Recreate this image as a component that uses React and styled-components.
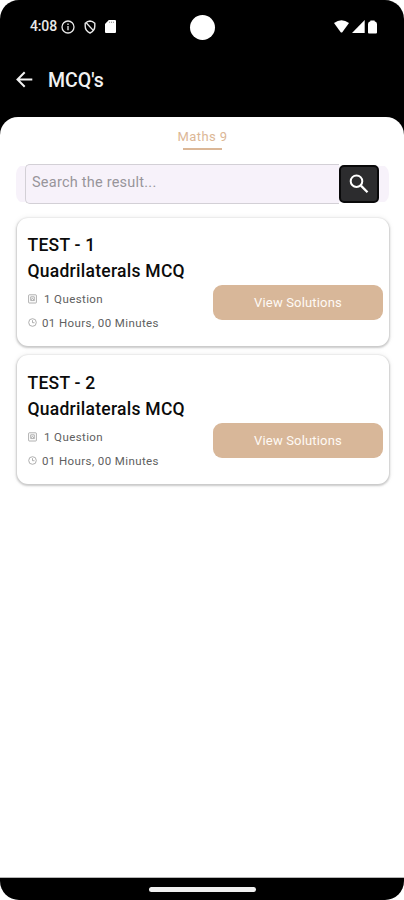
import React from "react";
import styled, { createGlobalStyle } from "styled-components";

const GlobalStyle = createGlobalStyle`
  *, *::before, *::after { box-sizing: border-box; }
  body { margin: 0; background: #fff; font-family: Roboto, "Liberation Sans", sans-serif; }
`;

const Device = styled.div`
  position: relative;
  display: flex;
  flex-direction: column;
  width: 404px;
  height: 900px;
  background: #000;
  border-radius: 19px;
  overflow: hidden;
`;

const StatusBar = styled.div`
  display: flex;
  justify-content: space-between;
  align-items: center;
  height: 53px;
  padding: 0 27px 0 30px;
  color: #e8e8e8;
`;

const StatusGroup = styled.div`
  display: flex;
  align-items: center;
  gap: ${(p) => p.$gap}px;
  svg { display: block; }
`;

const Clock = styled.span`
  width: 27px;
  margin: -1px -5px 0 0;
  font-size: 14px;
  font-weight: 500;
  line-height: 16px;
  letter-spacing: -0.15px;
  white-space: nowrap;
`;

const Camera = styled.div`
  position: absolute;
  top: 14.5px;
  left: 190px;
  width: 25px;
  height: 25px;
  border-radius: 50%;
  background: #fff;
`;

const AppBar = styled.header`
  display: flex;
  align-items: center;
  gap: 15px;
  height: 64px;
  padding: 0 16px 11px;
  color: #f2f2f2;
  svg { display: block; }
`;

const Title = styled.h1`
  margin: 2px 0 0;
  font-size: 19.5px;
  font-weight: 500;
  line-height: 24px;
`;

const Sheet = styled.main`
  display: flex;
  flex-direction: column;
  height: 761px;
  padding: 11px 15px 0 16px;
  background: #fff;
  border-radius: 18px 18px 0 0;
  border-bottom: 1px solid #b5b5b5;
`;

const Tab = styled.div`
  align-self: center;
  display: flex;
  flex-direction: column;
  align-items: center;
  color: #dcb796;
  font-size: 13px;
  line-height: 18px;
  letter-spacing: 0.45px;
  &::after {
    content: "";
    width: 39px;
    height: 2px;
    margin-top: 2px;
    background: #dbb797;
  }
`;

const SearchBar = styled.div`
  display: flex;
  height: 40px;
  margin-top: 14px;
  padding: 0 10px 0 9px;
  background: linear-gradient(#f7f2fa, #f7f2fa) center / 100% 36px no-repeat;
  border-radius: 10px;
`;

const SearchField = styled.div`
  display: flex;
  flex: 1;
  align-items: center;
  padding: 0 0 3px 6px;
  background: #f7f2fa;
  border: 1px solid #d3d0d6;
  border-right: 0;
  border-radius: 5px 0 0 5px;
  color: #98959b;
  font-size: 14.5px;
  letter-spacing: 0.23px;
`;

const SearchButton = styled.button`
  display: grid;
  place-items: center;
  width: 40px;
  height: 38px;
  margin: 1px 0 -1px;
  padding: 0;
  background: #2c2c2e;
  border: 2px solid #09090a;
  border-radius: 5px;
  color: #fff;
`;

const TestList = styled.div`
  display: flex;
  flex-direction: column;
  gap: 9px;
  margin-top: 14px;
`;

const Card = styled.article`
  display: flex;
  justify-content: space-between;
  height: ${(p) => p.$height}px;
  margin: 0 0 0 1px;
  padding: ${(p) => p.$top}px 6px 0 10.5px;
  background: #fff;
  border-radius: 11px;
  box-shadow: 0 1px 2px 1px rgba(0, 0, 0, 0.19), 0 0 6px rgba(0, 0, 0, 0.07);
`;

const CardInfo = styled.div`
  white-space: nowrap;
`;

const CardTitle = styled.h2`
  margin: 0 0 2.5px;
  color: #0b0b0b;
  font-size: 17.5px;
  font-weight: 500;
  line-height: 25.5px;
  letter-spacing: 0.26px;
`;

const Meta = styled.div`
  display: flex;
  align-items: center;
  gap: ${(p) => p.$gap}px;
  height: 24px;
  padding-left: 0.5px;
  color: #606060;
  font-size: 11.5px;
  letter-spacing: 0.4px;
  svg { display: block; }
`;

const SolutionsButton = styled.button`
  width: 170px;
  height: 35px;
  margin-top: 52px;
  padding: 0;
  background: #d8b799;
  border: 0;
  border-radius: 9px;
  color: #fffaf5;
  font: 400 13px Roboto, sans-serif;
  letter-spacing: 0.17px;
`;

const NavigationBar = styled.footer`
  display: grid;
  place-items: center;
  flex: 1;
`;

const HomeHandle = styled.div`
  width: 107px;
  height: 5px;
  border-radius: 3px;
  background: #f0f0f0;
`;

const InfoIcon = () => (
  <svg width="14" height="14" viewBox="0 0 14 14" fill="none" stroke="currentColor" strokeWidth="1.3">
    <circle cx="7" cy="7" r="6" />
    <path d="M7 6v4.2M7 3.6v1.4" />
  </svg>
);

const ShieldIcon = () => (
  <svg width="12" height="14" viewBox="0 0 12 14" fill="none" stroke="currentColor" strokeWidth="1.4">
    <path d="M6 1Q8.5 1.2 10.8 3.2V6.3C10.8 9.2 8.7 11.7 6 13 3.3 11.7 1.2 9.2 1.2 6.3V3.2Q3.5 1.2 6 1Z" />
    <path d="m2.4 3 6.8 7.4" />
  </svg>
);

const SdCardIcon = () => (
  <svg width="11" height="13" viewBox="0 0 11 13">
    <path d="M3.8 0H10q1 0 1 1v11q0 1-1 1H1q-1 0-1-1V4Z" fill="#fff" />
    <path d="M4.6 1.7v1.2M6.5 1.7v1.2M8.4 1.7v1.2" stroke="#777" strokeWidth=".8" />
  </svg>
);

const WifiIcon = () => (
  <svg width="15" height="13" viewBox="0 0 15 13" fill="#fff">
    <path d="M0 3Q7.5-2.5 15 3L8.3 12.2Q7.5 13 6.7 12.2Z" />
  </svg>
);

const SignalIcon = () => (
  <svg width="13" height="13" viewBox="0 0 13 13" fill="#fff">
    <path d="M12.7 0v13H0Z" />
  </svg>
);

const BatteryIcon = () => (
  <svg width="9" height="14" viewBox="0 0 9 14" fill="#fff">
    <path d="M2.4 1.3V.5h4.2v.8Q9 1.7 9 4v8.5q0 1-1 1H1q-1 0-1-1V4Q0 1.7 2.4 1.3Z" />
  </svg>
);

const BackIcon = () => (
  <svg width="17" height="17" viewBox="0 0 17 17" fill="none" stroke="currentColor" strokeWidth="2">
    <path d="M16.3 8.5H2M8.7 1.3 1.5 8.5l7.2 7.2" />
  </svg>
);

const SearchIcon = () => (
  <svg width="20" height="20" viewBox="0 0 20 20" fill="none" stroke="currentColor" strokeWidth="2">
    <circle cx="7.5" cy="7.2" r="5.8" />
    <path d="m11.9 11.6 6.6 6.6" strokeWidth="2.3" />
  </svg>
);

const QuestionIcon = () => (
  <svg width="9" height="10" viewBox="0 0 9 10" fill="none" stroke="#9c9c9c" strokeWidth=".8">
    <rect x=".6" y=".8" width="7.8" height="8.2" rx=".7" />
    <path d="M2.7 2.8h3.6v3.8H2.7ZM3 5.7l1.5-1.4L6 6.3" />
  </svg>
);

const TimeIcon = () => (
  <svg width="9" height="9" viewBox="0 0 9 9" fill="none" stroke="#9c9c9c" strokeWidth=".8">
    <circle cx="4.5" cy="4.5" r="3.8" />
    <path d="M4.5 2.2v2.5h2" />
  </svg>
);

const tests = [
  { name: "TEST - 1", topic: "Quadrilaterals MCQ", questions: "1 Question", time: "01 Hours, 00 Minutes", height: 128, top: 15 },
  { name: "TEST - 2", topic: "Quadrilaterals MCQ", questions: "1 Question", time: "01 Hours, 00 Minutes", height: 129, top: 16 },
];

const TestCard = ({ test }) => (
  <Card $height={test.height} $top={test.top}>
    <CardInfo>
      <CardTitle>{test.name}<br />{test.topic}</CardTitle>
      <Meta $gap={7}><QuestionIcon />{test.questions}</Meta>
      <Meta $gap={5}><TimeIcon />{test.time}</Meta>
    </CardInfo>
    <SolutionsButton>View Solutions</SolutionsButton>
  </Card>
);

export default function App() {
  return (
    <>
      <GlobalStyle />
      <Device>
        <StatusBar>
          <StatusGroup $gap={9}>
            <Clock>4:08</Clock>
            <InfoIcon />
            <ShieldIcon />
            <SdCardIcon />
          </StatusGroup>
          <StatusGroup $gap={3}>
            <WifiIcon />
            <SignalIcon />
            <BatteryIcon />
          </StatusGroup>
        </StatusBar>
        <Camera />
        <AppBar>
          <BackIcon />
          <Title>MCQ's</Title>
        </AppBar>
        <Sheet>
          <Tab>Maths 9</Tab>
          <SearchBar>
            <SearchField>
              Search the result...
            </SearchField>
            <SearchButton aria-label="Search"><SearchIcon /></SearchButton>
          </SearchBar>
          <TestList>
            {tests.map((test) => <TestCard key={test.name} test={test} />)}
          </TestList>
        </Sheet>
        <NavigationBar><HomeHandle /></NavigationBar>
      </Device>
    </>
  );
}
